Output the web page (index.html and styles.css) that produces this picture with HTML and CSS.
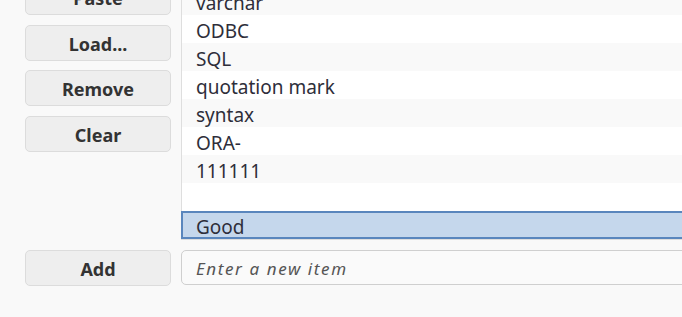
FILE: index.html
```html
<!DOCTYPE html>
<html lang="en">
<head>
    <meta charset="UTF-8">
    <title>Item List</title>
    <link rel="stylesheet" href="styles.css">
</head>
<body>

<div class="panel">
    <div class="buttons">
        <button class="btn">Paste</button>
        <button class="btn">Load...</button>
        <button class="btn">Remove</button>
        <button class="btn">Clear</button>
    </div>

    <ul class="item-list">
        <li>varchar</li>
        <li>ODBC</li>
        <li>SQL</li>
        <li>quotation mark</li>
        <li>syntax</li>
        <li>ORA-</li>
        <li>111111</li>
        <li></li>
        <li class="selected">Good</li>
    </ul>

    <button class="btn">Add</button>
    <input type="text" class="new-item" placeholder="Enter a new item">
</div>

</body>
</html>
```

FILE: styles.css
```css
html, body {
    margin: 0;
    background-color: #f9f9f9;
    overflow: hidden;
}
body {
    font-family: "Noto Sans", "Open Sans", sans-serif;
    color: #333;
}
.panel {
    width: 780px;
    margin-top: -21px;
    padding-left: 25px;
    display: grid;
    grid-template-columns: 146px 1fr;
    column-gap: 10px;
    row-gap: 10px;
}
.buttons {
    display: flex;
    flex-direction: column;
    gap: 9.5px;
}
.btn {
    height: 36px;
    padding: 2px 0 0 0;
    background-color: #eeeeee;
    border: 1px solid #dcdcdc;
    border-radius: 5px;
    font-family: inherit;
    font-size: 18px;
    font-weight: bold;
    color: #333;
}
.item-list {
    list-style: none;
    margin: 8px 0 0 0;
    padding: 0;
    background: white;
    border-left: 1px solid #dedede;
    border-bottom: 1px solid #dedede;
}
.item-list li {
    height: 28px;
    line-height: 32px;
    padding-left: 14px;
    font-size: 19px;
    color: #2e2e3a;
    box-sizing: border-box;
}
.item-list li:nth-child(odd) {
    background-color: #f9f9f9;
}
.item-list li.selected {
    background-color: #c5d7ec;
    border: 2px solid #5a86bd;
    border-right: none;
    line-height: 28px;
    margin-left: -1px;
    padding-left: 13px;
}
.new-item {
    height: 35px;
    box-sizing: border-box;
    margin: 0;
    padding: 2px 14px 0 14px;
    border: 1px solid #cfcfcf;
    border-radius: 5px;
    background-color: #fafafa;
    font-family: inherit;
    font-size: 17px;
}
.new-item::placeholder {
    color: #555;
    font-style: italic;
    letter-spacing: 1.6px;
}
```
